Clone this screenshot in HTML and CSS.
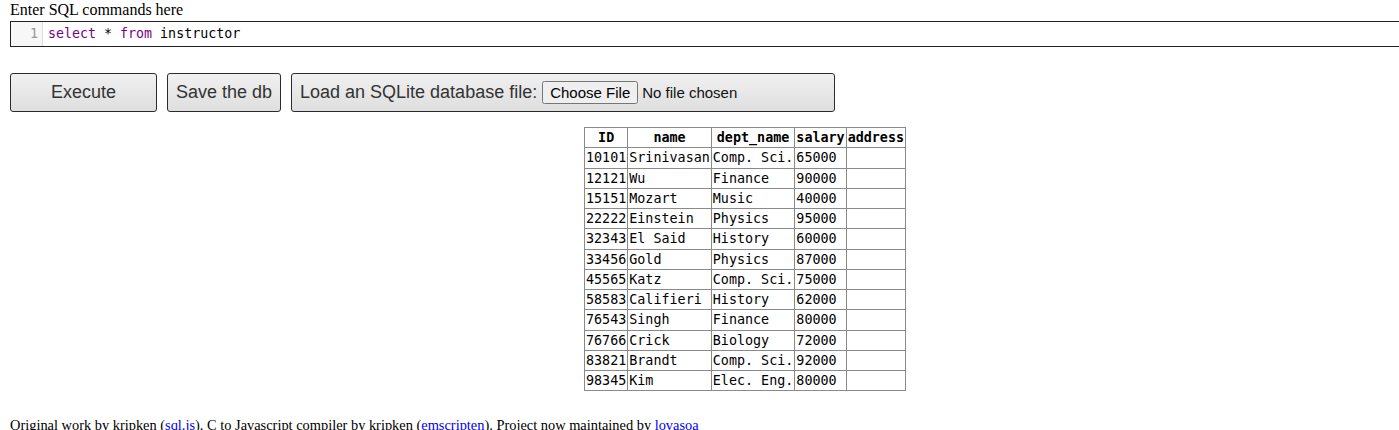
FILE: index.html
```html
<!DOCTYPE html>
<html>
<head>
<meta charset="utf-8">
<title>SQL</title>
<link rel="stylesheet" href="styles.css">
</head>
<body>
<label class="prompt">Enter SQL commands here</label>
<div class="editor">
  <div class="gutter">1</div>
  <div class="code"><span class="kw">select</span> * <span class="kw">from</span> instructor</div>
</div>
<div class="buttons">
  <button class="btn btn-exec">Execute</button>
  <button class="btn btn-save">Save the db</button>
  <label class="btn btn-load"><span class="load-text">Load an SQLite database file:</span><input type="file" class="file"></label>
</div>
<div class="results">
<table class="grid">
<thead><tr><th>ID</th><th>name</th><th>dept_name</th><th>salary</th><th>address</th></tr></thead>
<tbody>
<tr><td>10101</td><td>Srinivasan</td><td>Comp. Sci.</td><td>65000</td><td></td></tr>
<tr><td>12121</td><td>Wu</td><td>Finance</td><td>90000</td><td></td></tr>
<tr><td>15151</td><td>Mozart</td><td>Music</td><td>40000</td><td></td></tr>
<tr><td>22222</td><td>Einstein</td><td>Physics</td><td>95000</td><td></td></tr>
<tr><td>32343</td><td>El Said</td><td>History</td><td>60000</td><td></td></tr>
<tr><td>33456</td><td>Gold</td><td>Physics</td><td>87000</td><td></td></tr>
<tr><td>45565</td><td>Katz</td><td>Comp. Sci.</td><td>75000</td><td></td></tr>
<tr><td>58583</td><td>Califieri</td><td>History</td><td>62000</td><td></td></tr>
<tr><td>76543</td><td>Singh</td><td>Finance</td><td>80000</td><td></td></tr>
<tr><td>76766</td><td>Crick</td><td>Biology</td><td>72000</td><td></td></tr>
<tr><td>83821</td><td>Brandt</td><td>Comp. Sci.</td><td>92000</td><td></td></tr>
<tr><td>98345</td><td>Kim</td><td>Elec. Eng.</td><td>80000</td><td></td></tr>
</tbody>
</table>
</div>
<footer class="footer">Original work by kripken (<a href="#">sql.js</a>). C to Javascript compiler by kripken (<a href="#">emscripten</a>). Project now maintained by <a href="#">lovasoa</a></footer>
</body>
</html>
```

FILE: styles.css
```css
html, body {
  margin: 0;
  padding: 0;
  overflow: hidden;
}
body {
  padding-left: 10px;
  font-family: "Liberation Serif", "Times New Roman", serif;
  font-size: 16px;
  color: #000;
  background: #fff;
}
.prompt {
  display: block;
  height: 21px;
  line-height: 20px;
}
.editor {
  display: flex;
  width: 1420px;
  height: 24px;
  border: 1px solid #222;
  font-family: "DejaVu Sans Mono", "Liberation Mono", monospace;
  font-size: 13.3px;
  line-height: 24px;
}
.gutter {
  width: 27px;
  padding-right: 4px;
  text-align: right;
  color: #999;
  background: #f7f7f7;
  border-right: 1px solid #ddd;
}
.code {
  padding-left: 5px;
  color: #000;
}
.kw {
  color: #770088;
}
.buttons {
  display: flex;
  align-items: center;
  gap: 10px;
  margin-top: 26px;
}
.btn {
  box-sizing: border-box;
  flex: none;
  height: 39px;
  display: flex;
  align-items: center;
  justify-content: center;
  border: 1px solid #2b2b2b;
  border-radius: 3px;
  background: linear-gradient(#f1f1f1, #dedede);
  color: #333;
  font-family: "Liberation Sans", Arial, sans-serif;
  font-size: 18px;
  padding: 0 8px;
  white-space: nowrap;
}
.btn-exec {
  width: 147px;
}
.btn-save {
  width: 114px;
}
.btn-load {
  width: 544px;
  justify-content: flex-start;
  gap: 5px;
}
.load-text {
  flex: none;
}
.file {
  font-family: "Liberation Sans", Arial, sans-serif;
  font-size: 15px;
  color: #111;
}
.results {
  margin-top: 15px;
  padding-left: 574px;
}
.grid {
  border-collapse: collapse;
  font-family: "DejaVu Sans Mono", "Liberation Mono", monospace;
  font-size: 13.38px;
}
.grid th, .grid td {
  border: 1px solid #8a8a8a;
  padding: 1px 1px;
  line-height: 17.25px;
  text-align: left;
  white-space: nowrap;
}
.grid th {
  text-align: center;
  font-weight: bold;
}
.footer {
  margin-top: 26px;
  font-size: 14.4px;
}
.footer a {
  color: #0000ee;
  text-decoration: none;
}
```
